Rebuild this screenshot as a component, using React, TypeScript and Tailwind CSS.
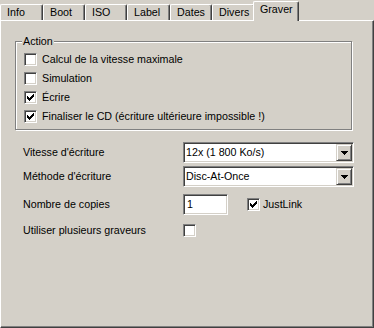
import React from "react";

const tabs = [
  { label: "Info", w: "w-[43px]" },
  { label: "Boot", w: "w-[42px]" },
  { label: "ISO", w: "w-[42px]" },
  { label: "Label", w: "w-[43px]" },
  { label: "Dates", w: "w-[42px]" },
  { label: "Divers", w: "w-[43px]" },
];

const CheckMark = () => (
  <svg width="7" height="7" viewBox="0 0 7 7" shapeRendering="crispEdges">
    <rect x="0" y="2" width="1" height="3" fill="#000" />
    <rect x="1" y="3" width="1" height="3" fill="#000" />
    <rect x="2" y="4" width="1" height="3" fill="#000" />
    <rect x="3" y="3" width="1" height="3" fill="#000" />
    <rect x="4" y="2" width="1" height="3" fill="#000" />
    <rect x="5" y="1" width="1" height="3" fill="#000" />
    <rect x="6" y="0" width="1" height="3" fill="#000" />
  </svg>
);

const CheckBox: React.FC<{ checked?: boolean }> = ({ checked }) => (
  <div className="w-[13px] h-[13px] shrink-0 bg-white border border-t-[#808080] border-l-[#808080] border-b-white border-r-white shadow-[inset_1px_1px_#404040,inset_-1px_-1px_#d4d0c8] flex items-center justify-center">
    {checked && <CheckMark />}
  </div>
);

const CheckRow: React.FC<{ checked?: boolean; label: string }> = ({
  checked,
  label,
}) => (
  <div className="flex items-center h-[13px]">
    <CheckBox checked={checked} />
    <span className="ml-[5px] whitespace-nowrap">{label}</span>
  </div>
);

const Combo: React.FC<{ value: string }> = ({ value }) => (
  <div className="w-[171px] h-[21px] bg-white border border-t-[#808080] border-l-[#808080] border-b-white border-r-white shadow-[inset_1px_1px_#404040,inset_-1px_-1px_#d4d0c8] p-[1px] flex">
    <div className="flex-1 flex items-center pl-[1px] whitespace-nowrap">
      {value}
    </div>
    <div className="w-[16px] h-full bg-[#d4d0c8] border border-t-[#d4d0c8] border-l-[#d4d0c8] border-b-[#404040] border-r-[#404040] shadow-[inset_1px_1px_#fff,inset_-1px_-1px_#808080] flex items-center justify-center">
      <svg width="7" height="4" viewBox="0 0 7 4" shapeRendering="crispEdges">
        <path d="M0 0h7v1h-1v1h-1v1h-1v1h-1v-1h-1v-1h-1v-1h-1z" fill="#000" />
      </svg>
    </div>
  </div>
);

const Row: React.FC<{ label: string; children: React.ReactNode }> = ({
  label,
  children,
}) => (
  <div className="flex items-center">
    <div className="w-[160px] shrink-0 whitespace-nowrap">{label}</div>
    {children}
  </div>
);

export default function App() {
  return (
    <div className="w-[374px] h-[328px] bg-[#d4d0c8] font-['Liberation_Sans',Arial,sans-serif] text-[10.7px] leading-none text-black flex flex-col overflow-hidden">
      <div className="h-[20px] flex items-end shrink-0">
        {tabs.map((t) => (
          <div
            key={t.label}
            className={`${t.w} h-[16px] shrink-0 border-t border-l border-r border-t-white border-l-white border-r-[#404040] rounded-t-[2px] shadow-[inset_-1px_0_#808080] pl-[6px] leading-[15px]`}
          >
            {t.label}
          </div>
        ))}
        <div className="relative z-10 w-[46px] h-[20px] -ml-[2px] -mb-[1px] shrink-0 bg-[#d4d0c8] border-t border-l border-r border-t-white border-l-white border-r-[#404040] rounded-t-[2px] shadow-[inset_-1px_0_#808080] pl-[6px] leading-[15px]">
          Graver
        </div>
      </div>

      <div className="flex-1 border border-t-white border-l-white border-r-[#404040] border-b-[#404040] shadow-[inset_-1px_-1px_#808080] flex flex-col">
        <div className="relative ml-[14px] mt-[20px] w-[337px] h-[89px] border border-[#808080] shadow-[inset_1px_1px_#fff,1px_1px_#fff] pt-[11px] pl-[8px] flex flex-col gap-[6px]">
          <span className="absolute -top-[6px] left-[6px] px-[1px] bg-[#d4d0c8]">
            Action
          </span>
          <CheckRow label="Calcul de la vitesse maximale" />
          <CheckRow label="Simulation" />
          <CheckRow checked label="Écrire" />
          <CheckRow checked label="Finaliser le CD (écriture ultérieure impossible !)" />
        </div>

        <div className="ml-[22px] mt-[12px] flex flex-col">
          <Row label="Vitesse d'écriture">
            <Combo value="12x (1 800 Ko/s)" />
          </Row>
          <div className="mt-[3px]">
            <Row label="Méthode d'écriture">
              <Combo value="Disc-At-Once" />
            </Row>
          </div>
          <div className="mt-[7px]">
            <Row label="Nombre de copies">
              <div className="w-[45px] h-[21px] bg-white border border-t-[#808080] border-l-[#808080] border-b-white border-r-white shadow-[inset_1px_1px_#404040,inset_-1px_-1px_#d4d0c8] flex items-center pl-[3px]">
                1
              </div>
              <div className="ml-[19px] flex items-center">
                <CheckBox checked />
                <span className="ml-[3px]">JustLink</span>
              </div>
            </Row>
          </div>
          <div className="mt-[9px]">
            <Row label="Utiliser plusieurs graveurs">
              <CheckBox />
            </Row>
          </div>
        </div>
      </div>
    </div>
  );
}
